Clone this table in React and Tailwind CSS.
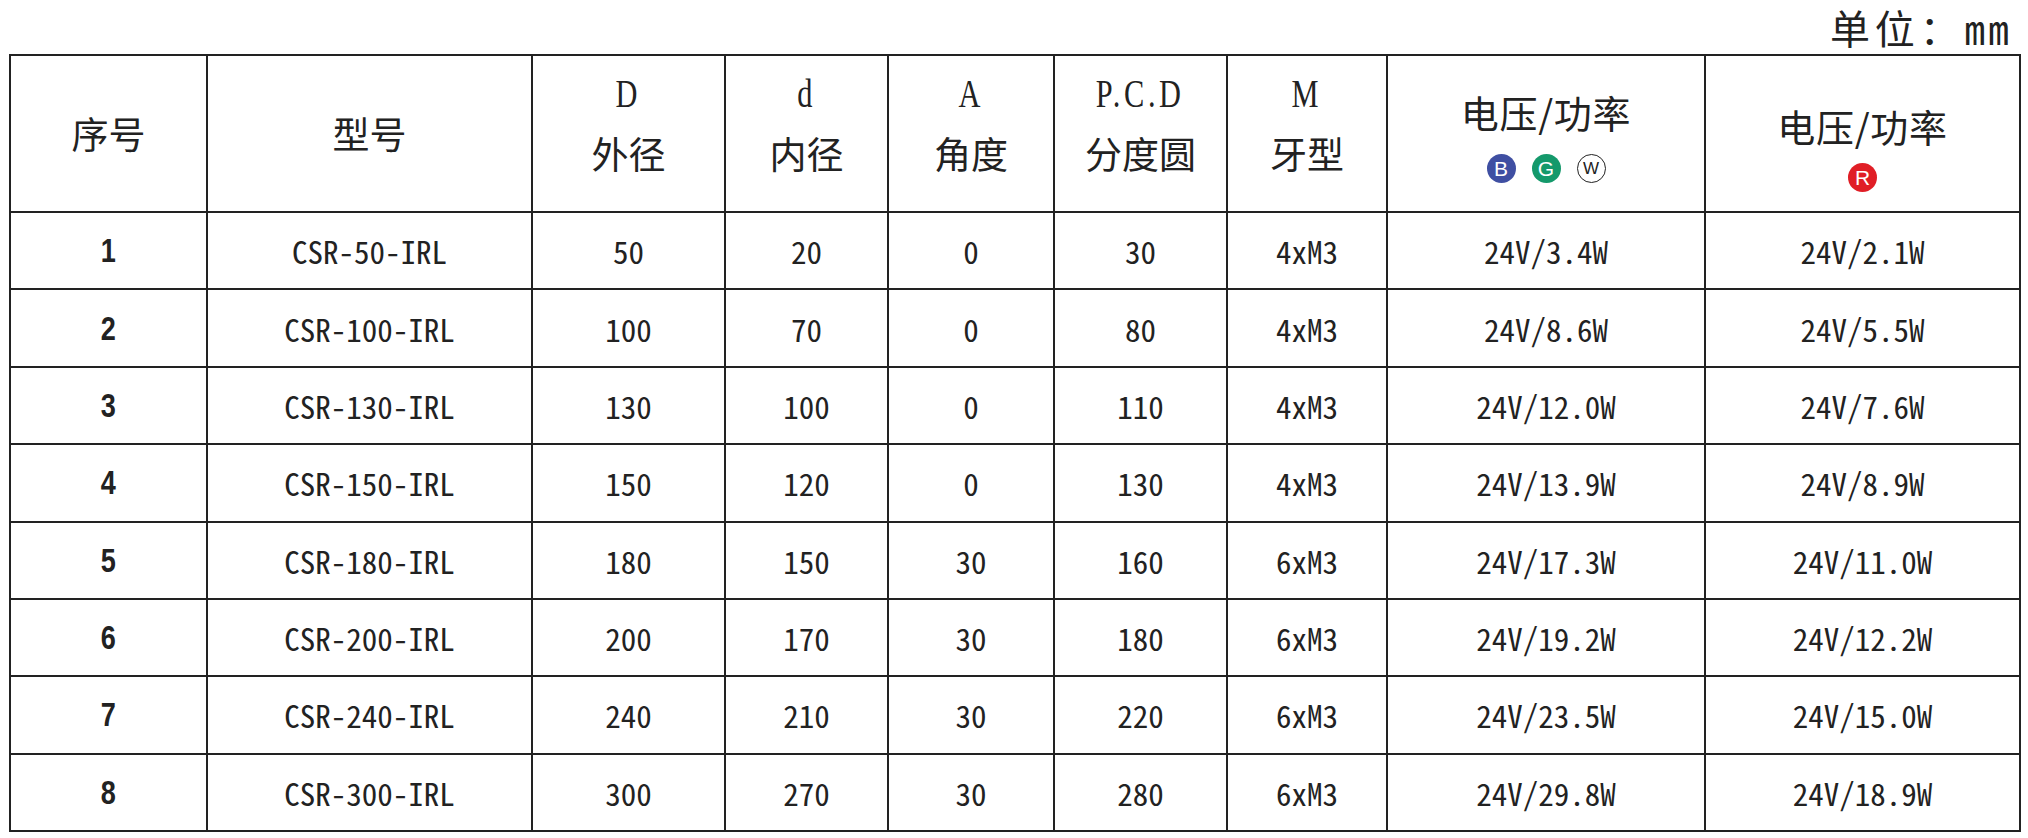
import React from "react";

const data = [
  ["1", "CSR-50-IRL", "50", "20", "0", "30", "4xM3", "24V/3.4W", "24V/2.1W"],
  ["2", "CSR-100-IRL", "100", "70", "0", "80", "4xM3", "24V/8.6W", "24V/5.5W"],
  ["3", "CSR-130-IRL", "130", "100", "0", "110", "4xM3", "24V/12.0W", "24V/7.6W"],
  ["4", "CSR-150-IRL", "150", "120", "0", "130", "4xM3", "24V/13.9W", "24V/8.9W"],
  ["5", "CSR-180-IRL", "180", "150", "30", "160", "6xM3", "24V/17.3W", "24V/11.0W"],
  ["6", "CSR-200-IRL", "200", "170", "30", "180", "6xM3", "24V/19.2W", "24V/12.2W"],
  ["7", "CSR-240-IRL", "240", "210", "30", "220", "6xM3", "24V/23.5W", "24V/15.0W"],
  ["8", "CSR-300-IRL", "300", "270", "30", "280", "6xM3", "24V/29.8W", "24V/18.9W"],
];

const cjk = { fontFamily: "'Noto Sans CJK SC', 'Noto Sans', sans-serif" };
const mono = { fontFamily: "'Noto Sans Mono CJK SC', 'Liberation Mono', monospace" };
const serif = { fontFamily: "'Liberation Serif', serif" };
const narrow = { fontFamily: "'Liberation Sans Narrow', 'Liberation Sans', sans-serif" };

const cell = "flex items-center justify-center border-r-2 border-b-2 border-[#222] text-[#222]";

function Latin({ children }) {
  return (
    <span
      className="inline-block scale-x-[0.74] text-[41px] leading-[40px] tracking-[0.12em] text-[#222]"
      style={serif}
    >
      {children}
    </span>
  );
}

function TwoLine({ top, bottom }) {
  return (
    <div className={cell + " flex-col pb-[22px]"}>
      <Latin>{top}</Latin>
      <span className="mt-[20px] text-[37px] leading-[40px]" style={cjk}>
        {bottom}
      </span>
    </div>
  );
}

function Dot({ bg, letter, outline }) {
  return (
    <span
      className={
        "flex h-[29px] w-[29px] items-center justify-center rounded-full leading-none " +
        bg +
        (outline ? " border border-[#222] text-[#222] text-[17px]" : " text-white text-[21px]")
      }
      style={{ fontFamily: "'Liberation Sans', Arial, sans-serif" }}
    >
      {letter}
    </span>
  );
}

export default function App() {
  return (
    <div className="h-[838px] w-[2028px] bg-white">
      <div className="flex h-[54px] items-center justify-end pr-[16px] text-[#222]">
        <span className="text-[40px] leading-none tracking-[0.12em]" style={cjk}>
          单位：
        </span>
        <span className="text-[41px] leading-none tracking-[0.08em]" style={mono}>
          mm
        </span>
      </div>
      <div className="ml-[9px] grid w-[2012px] grid-cols-[197px_325px_193px_163px_166px_173px_160px_318px_315px] grid-rows-[157px_repeat(8,77.375px)] border-l-2 border-t-2 border-[#222]">
        <div className={cell}>
          <span className="text-[37px]" style={cjk}>序号</span>
        </div>
        <div className={cell}>
          <span className="text-[37px]" style={cjk}>型号</span>
        </div>
        <TwoLine top="D" bottom="外径" />
        <TwoLine top="d" bottom="内径" />
        <TwoLine top="A" bottom="角度" />
        <TwoLine top="P.C.D" bottom="分度圆" />
        <TwoLine top="M" bottom="牙型" />
        <div className="flex flex-col items-center justify-start border-r-2 border-b-2 border-[#222] pt-[36px] text-[#222]">
          <span className="text-[38px] leading-[40px] tracking-[0.02em]" style={cjk}>电压/功率</span>
          <div className="mt-[22px] flex gap-[16px]">
            <Dot bg="bg-[#3f4fa2]" letter="B" />
            <Dot bg="bg-[#14996b]" letter="G" />
            <Dot bg="bg-white" letter="W" outline />
          </div>
        </div>
        <div className="flex flex-col items-center justify-start border-r-2 border-b-2 border-[#222] pt-[50px] text-[#222]">
          <span className="text-[38px] leading-[40px] tracking-[0.02em]" style={cjk}>电压/功率</span>
          <div className="mt-[17px] flex">
            <Dot bg="bg-[#e01e26]" letter="R" />
          </div>
        </div>
        {data.map((row) =>
          row.map((v, i) => (
            <div key={row[0] + "-" + i} className={cell}>
              {i === 0 ? (
                <span className="inline-block scale-x-[0.82] text-[33px] font-bold leading-none" style={narrow}>
                  {v}
                </span>
              ) : (
                <span className="text-[31px] leading-none" style={mono}>
                  {v}
                </span>
              )}
            </div>
          ))
        )}
      </div>
    </div>
  );
}
